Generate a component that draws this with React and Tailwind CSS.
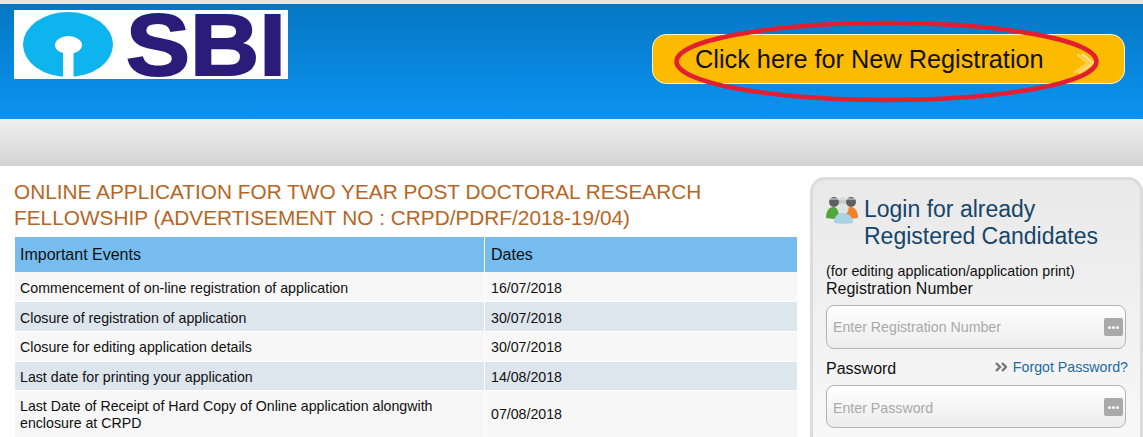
import React from 'react';

const events = [
    { name: 'Commencement of on-line registration of application', date: '16/07/2018', gap: '', h: 'h-[29px] pt-[2px]', bg: 'bg-[#f7f7f7]' },
    { name: 'Closure of registration of application', date: '30/07/2018', gap: 'mt-px', h: 'h-[29px] pt-[2px]', bg: 'bg-[#dde5ed]' },
    { name: 'Closure for editing application details', date: '30/07/2018', gap: 'mt-px', h: 'h-[29px]', bg: 'bg-[#f7f7f7]' },
    { name: 'Last date for printing your application', date: '14/08/2018', gap: 'mt-px', h: 'h-[28px] pt-px', bg: 'bg-[#dde5ed]' },
    { name: 'Last Date of Receipt of Hard Copy of Online application alongwith enclosure at CRPD', date: '07/08/2018', gap: 'mt-px', h: 'h-[47px] leading-[17px]', bg: 'bg-[#f7f7f7]' },
];

const SbiLogo = () => (
    <div className="flex h-[69px] w-[274px] items-start bg-white">
        <svg width="112" height="69" viewBox="0 0 112 69" className="shrink-0">
            <ellipse cx="54" cy="34.5" rx="45" ry="32.5" fill="#0db4ee" />
            <ellipse cx="54.5" cy="35" rx="13.5" ry="9" fill="#fff" />
            <rect x="49" y="36" width="10.5" height="33" fill="#fff" />
        </svg>
        <span className="origin-left scale-x-[1.09] text-[88px] font-bold leading-[69px] text-[#2a1c78] [-webkit-text-stroke:2px_#2a1c78]">SBI</span>
    </div>
);

const PeopleIcon = () => (
    <svg width="32" height="28" viewBox="0 0 32 28" className="shrink-0">
        <circle cx="16.5" cy="5.5" r="4" fill="#c9cccc" />
        <circle cx="8" cy="6" r="5" fill="#5c6062" />
        <circle cx="25" cy="6" r="5" fill="#5c6062" />
        <path d="M4 3h25" stroke="#e8e8e8" strokeWidth="1" />
        <path d="M0 22c0-7 3-11 7-11s6 3 6 10l-5 2z" fill="#54a53a" />
        <path d="M32 22c0-7-3-11-7-11s-6 3-6 10l5 2z" fill="#ee8429" />
        <circle cx="17" cy="13" r="5.5" fill="#dfe3e3" />
        <path d="M8 27c0-6 3-10 9-10s10 4 10 10c-5 1-14 1-19 0z" fill="#a9d2e4" />
    </svg>
);

const FieldIcon = () => (
    <span className="absolute right-[2px] top-[12px] flex h-[18px] w-[19px] items-center justify-center gap-[1px] rounded-[2px] bg-[#a9a9a9]">
        <i className="h-[3px] w-[3px] rounded-full bg-white" />
        <i className="h-[3px] w-[3px] rounded-full bg-white" />
        <i className="h-[3px] w-[3px] rounded-full bg-white" />
    </span>
);

const Field = ({ placeholder, h, top }) => (
    <div className={`relative ${h} w-[300px] rounded-[8px] border border-[#b4b4b4] bg-gradient-to-b from-[#ffffff] to-[#ececec]`}>
        <span className={`absolute left-[6px] ${top} text-[14.2px] leading-[16px] text-[#a9a9a9]`}>{placeholder}</span>
        <FieldIcon />
    </div>
);

export default function App() {
    return (
        <div className="h-[437px] w-[1143px] overflow-hidden bg-white font-['Liberation_Sans',Arial,sans-serif] text-[#111]">
            <div className="h-[4px] bg-[#e6e6e6]" />

            {/* Blue header */}
            <header className="relative flex h-[115px] justify-between bg-gradient-to-b from-[#0577c2] to-[#0b93f2] pl-[14px] pr-[18px] pt-[6px]">
                <SbiLogo />
                <div className="relative mt-[24px] flex h-[50px] w-[473px] items-center rounded-[14px] border border-[#fff3cf] bg-[#fdbb00] pl-[42px] pt-[2px]">
                    <span className="text-[25.3px] leading-none text-[#111]">Click here for New Registration</span>
                    <svg width="22" height="22" viewBox="0 0 22 22" className="absolute left-[421px] top-[18px]" fill="none" strokeWidth="2.5">
                        <path d="M8 1 19 10 5 20" stroke="#ffe08a" />
                        <path d="M3 1 14 10 0 20" stroke="#ffd05a" />
                    </svg>
                </div>
                <svg width="440" height="90" viewBox="0 0 440 90" className="absolute left-[667px] top-[14px]" fill="none">
                    <ellipse cx="219.5" cy="43.5" rx="210" ry="38.5" stroke="#e21f30" strokeWidth="4.5" />
                </svg>
            </header>

            {/* Grey bar */}
            <div className="h-[47px] bg-gradient-to-b from-[#f1f1f1] to-[#d2d2d2]" />

            <main className="flex items-start justify-between pl-[14px]">
                <section className="w-[784px] pt-[13px]">
                    <h1 className="text-[20.8px] leading-[26px] text-[#b8651f]">
                        ONLINE APPLICATION FOR TWO YEAR POST DOCTORAL RESEARCH FELLOWSHIP (ADVERTISEMENT NO : CRPD/PDRF/2018-19/04)
                    </h1>
                    <div className="ml-[1px] mt-[6px] w-[782px] text-[14.2px] leading-[18px]">
                        <div className="flex h-[35px] items-center gap-px bg-white text-[16px]">
                            <div className="flex h-full w-[469px] items-center bg-[#76bcef] pl-[5px]">Important Events</div>
                            <div className="flex h-full flex-1 items-center bg-[#76bcef] pl-[6px]">Dates</div>
                        </div>
                        {events.map((row) => (
                            <div key={row.name} className={`flex gap-px ${row.gap}`}>
                                <div className={`flex w-[469px] items-center pl-[5px] pr-[10px] ${row.h} ${row.bg}`}>{row.name}</div>
                                <div className={`flex flex-1 items-center pl-[6px] ${row.h} ${row.bg}`}>{row.date}</div>
                            </div>
                        ))}
                    </div>
                </section>

                {/* Login panel */}
                <aside className="mt-[11px] h-[300px] w-[333px] rounded-t-[15px] border-[3px] border-b-0 border-[#dcdcdc] bg-gradient-to-b from-[#e9e9e9] to-[#fafafa] pl-[13px] pt-[16px]">
                    <div className="flex items-start gap-[6px]">
                        <PeopleIcon />
                        <h2 className="text-[23px] leading-[27px] text-[#15456a]">Login for already<br />Registered Candidates</h2>
                    </div>
                    <p className="mt-[13px] text-[14.3px] leading-[16px]">(for editing application/application print)</p>
                    <label className="block text-[16px] leading-[20px]">Registration Number</label>
                    <div className="mt-[6px]"><Field placeholder="Enter Registration Number" h="h-[44px]" top="top-[13px]" /></div>
                    <div className="mt-[7px] flex h-[27px] w-[302px] items-start justify-between">
                        <label className="text-[16px] leading-[26px]">Password</label>
                        <a className="flex items-center gap-[6px] text-[14.2px] leading-[22px] text-[#1c6ba0]">
                            <svg width="12" height="10" viewBox="0 0 12 10" fill="none" stroke="#777" strokeWidth="2.4">
                                <path d="M1 1 5 5 1 9" />
                                <path d="M7 1 11 5 7 9" />
                            </svg>
                            Forgot Password?
                        </a>
                    </div>
                    <div className="mt-[2px]"><Field placeholder="Enter Password" h="h-[43px]" top="top-[14px]" /></div>
                </aside>
            </main>
        </div>
    );
}
